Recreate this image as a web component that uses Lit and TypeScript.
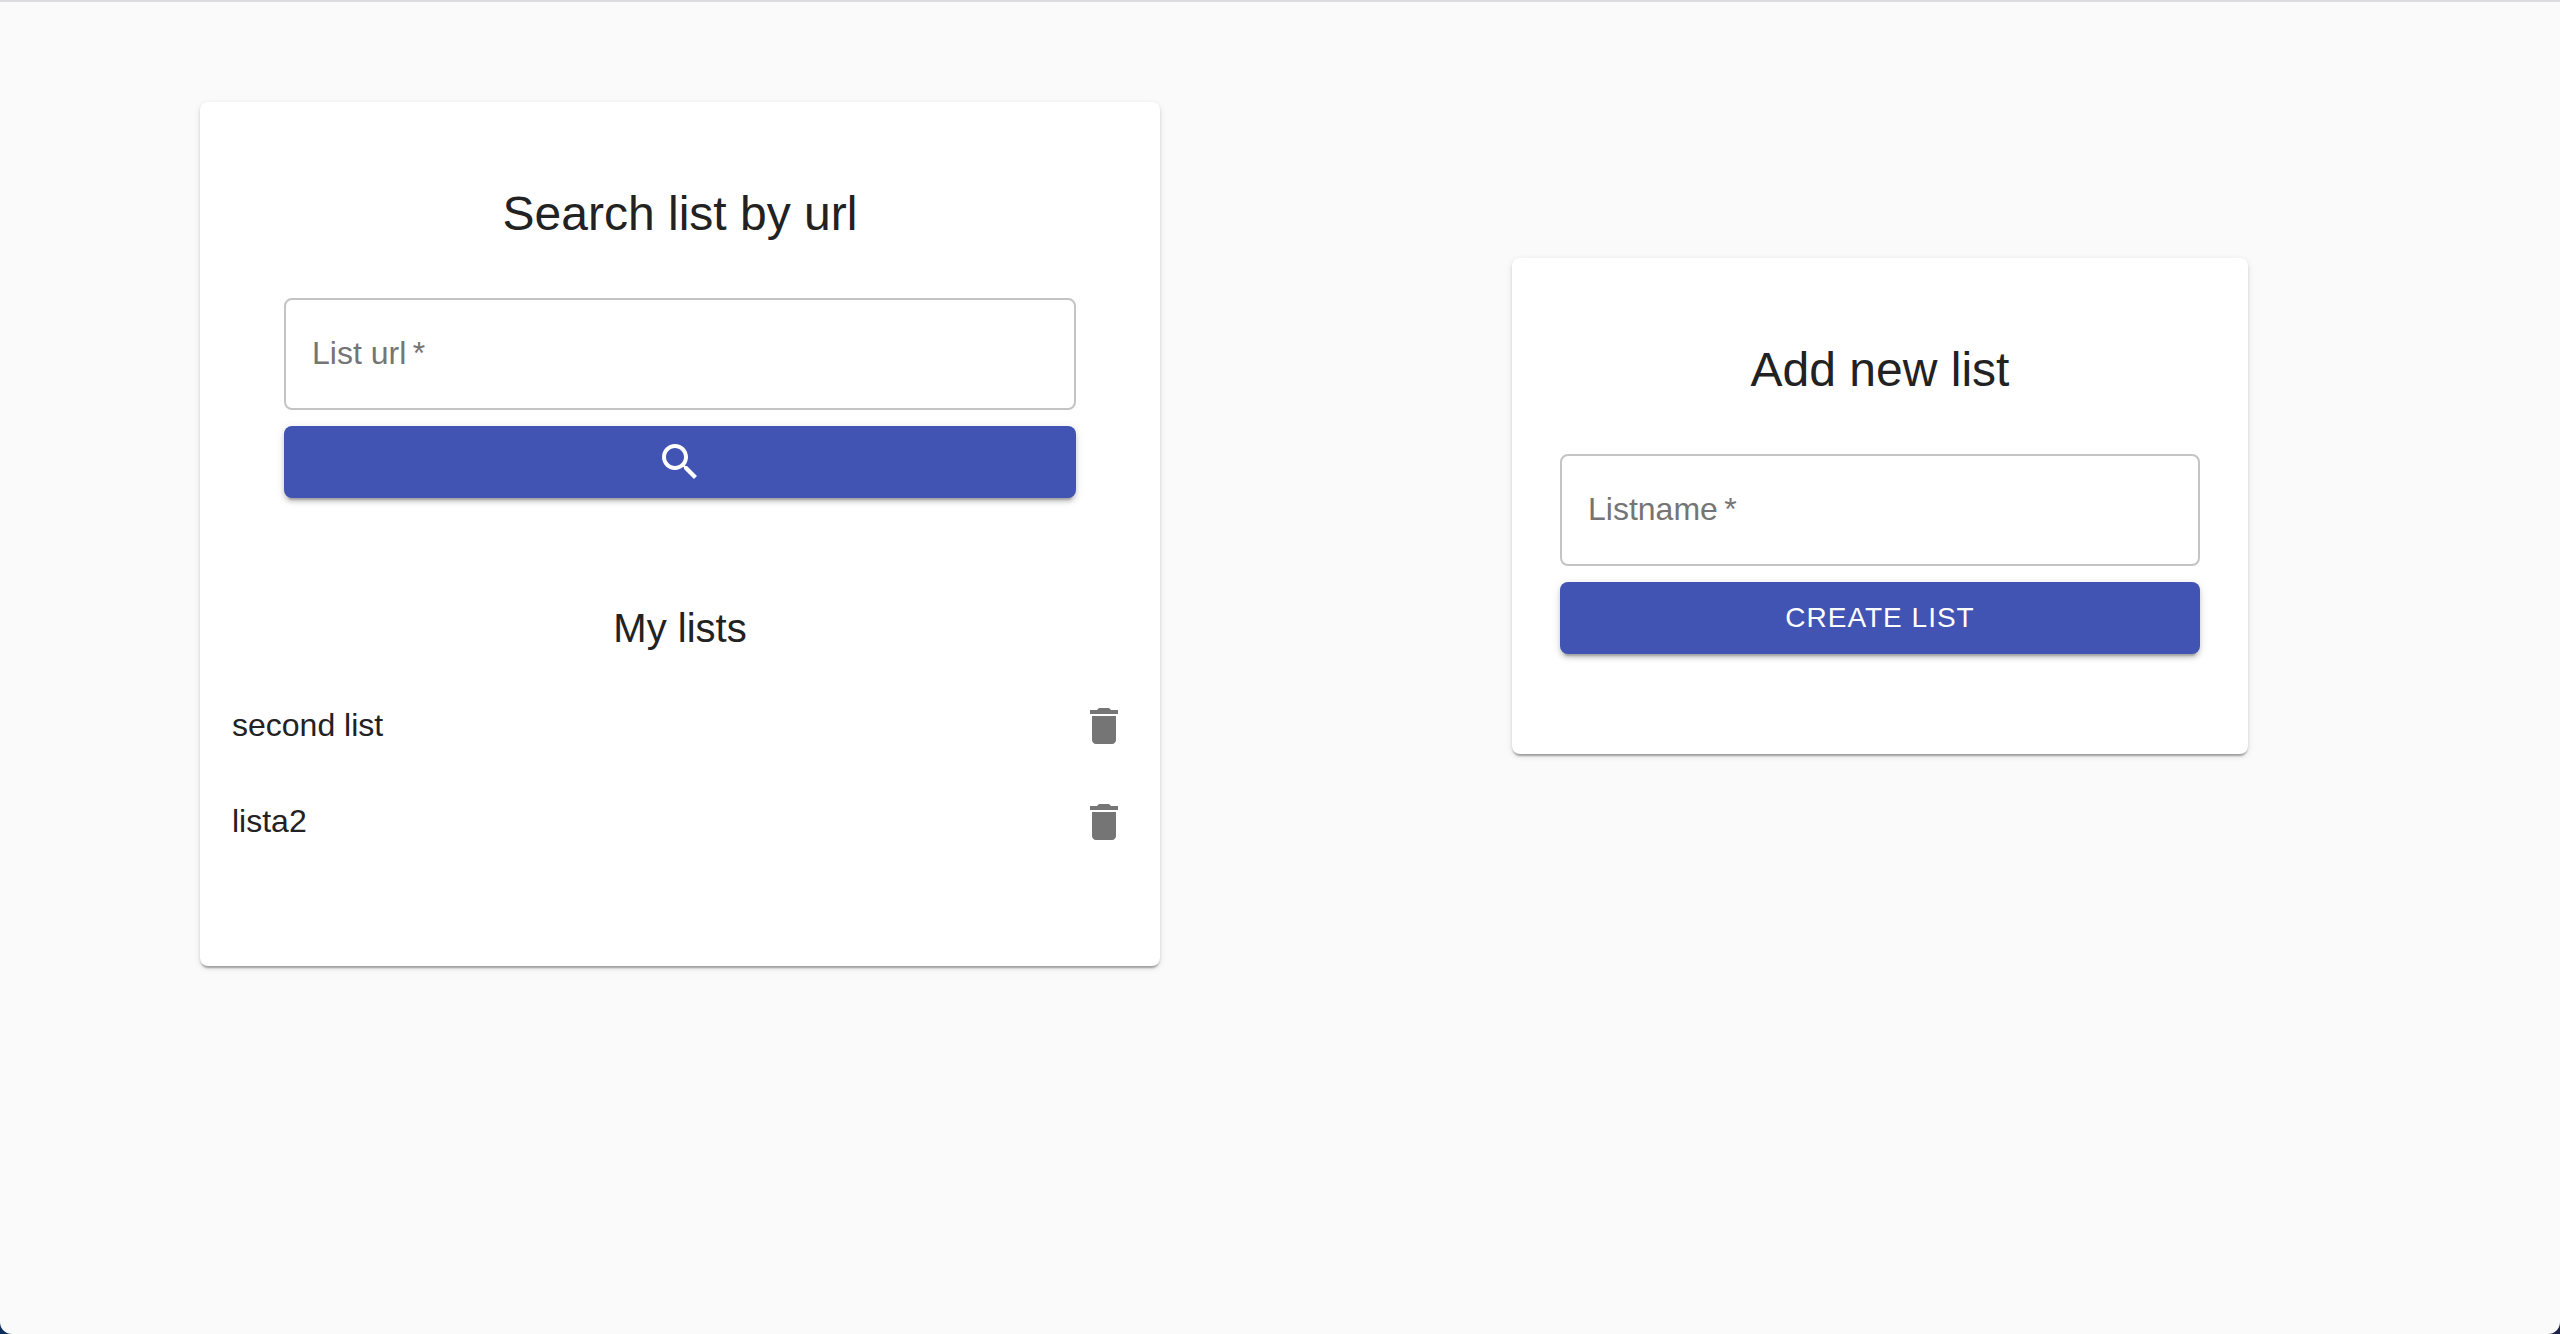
import { LitElement, html, css, svg } from "lit";
import { customElement, property, state } from "lit/decorators.js";

const searchIcon = svg`<path d="M15.5 14h-.79l-.28-.27C15.41 12.59 16 11.11 16 9.5 16 5.91 13.09 3 9.5 3S3 5.91 3 9.5 5.91 16 9.5 16c1.61 0 3.09-.59 4.23-1.57l.27.28v.79l5 4.99L20.49 19l-4.99-5zm-6 0C7.01 14 5 11.99 5 9.5S7.01 5 9.5 5 14 7.01 14 9.5 11.99 14 9.5 14z"></path>`;
const deleteIcon = svg`<path d="M6 19c0 1.1.9 2 2 2h8c1.1 0 2-.9 2-2V7H6v12zM19 4h-3.5l-1-1h-5l-1 1H5v2h14V4z"></path>`;

const base = css`
  * {
    box-sizing: border-box;
  }
  .icon {
    display: block;
    width: 48px;
    height: 48px;
    fill: currentColor;
  }
`;

/** Outlined text box whose label rests inside until there is a value. */
@customElement("outlined-field")
export class OutlinedField extends LitElement {
  @property() label = "";
  @state() private value = "";

  static styles = [
    base,
    css`
      :host {
        display: block;
      }
      .field {
        display: grid;
        align-items: center;
      }
      .input,
      .label {
        grid-area: 1 / 1;
        font-family: inherit;
        font-size: 32px;
      }
      .input {
        width: 100%;
        height: 112px;
        margin: 0;
        padding: 0 26px;
        border: 2px solid #c4c4c4;
        border-radius: 8px;
        background: none;
        color: inherit;
        outline: none;
      }
      .input:focus {
        border-color: #4154b3;
      }
      .label {
        padding: 0 28px 2px;
        line-height: 32px;
        color: #757575;
        pointer-events: none;
      }
      .label.hidden {
        opacity: 0;
      }
    `,
  ];

  render() {
    return html`
      <div class="field">
        <input
          class="input"
          id="box"
          type="text"
          required
          .value=${this.value}
          @input=${(e: Event) => (this.value = (e.target as HTMLInputElement).value)}
        />
        <label class="label ${this.value ? "hidden" : ""}" for="box">${this.label}&thinsp;*</label>
      </div>
    `;
  }
}

@customElement("app-root")
export class AppRoot extends LitElement {
  @state() private lists = ["second list", "lista2"];

  static styles = [
    base,
    css`
      :host {
        display: block;
        background: linear-gradient(to right, #0b2f5c, #1d2445);
        font-family: "Helvetica Neue", Helvetica, "Liberation Sans", Arial, sans-serif;
        color: #222222;
      }
      .page {
        min-height: 100vh;
        padding: 100px 80px;
        border-top: 2px solid #dcdbe0;
        border-radius: 0 0 12px 12px;
        background: #fafafa;
        display: grid;
        grid-template-columns: 1fr 1fr;
        align-items: start;
        justify-items: center;
      }
      .card {
        border-radius: 8px;
        background: #ffffff;
        padding-top: 80px;
        box-shadow:
          0 4px 2px -2px rgba(0, 0, 0, 0.2),
          0 2px 2px 0 rgba(0, 0, 0, 0.14),
          0 2px 6px 0 rgba(0, 0, 0, 0.12);
      }
      .search {
        width: 80%;
        padding-bottom: 96px;
      }
      .create {
        width: 100%;
        max-width: 736px;
        margin-top: 156px;
        padding-bottom: 100px;
      }
      .title,
      .subtitle {
        margin: 0;
        font-weight: 400;
        line-height: 64px;
        text-align: center;
      }
      .title {
        font-size: 48px;
      }
      .subtitle {
        margin-top: 98px;
        font-size: 40px;
      }
      .form {
        display: grid;
        gap: 16px;
        margin-top: 52px;
        padding: 0 48px;
      }
      .search .form {
        padding: 0 84px;
      }
      .submit {
        display: flex;
        align-items: center;
        justify-content: center;
        height: 72px;
        padding: 0 32px;
        border: 0;
        border-radius: 8px;
        background: #4154b3;
        color: #ffffff;
        font-family: inherit;
        font-size: 28px;
        letter-spacing: 1px;
        text-transform: uppercase;
        cursor: pointer;
        box-shadow:
          0 6px 2px -4px rgba(0, 0, 0, 0.2),
          0 4px 4px 0 rgba(0, 0, 0, 0.14),
          0 2px 10px 0 rgba(0, 0, 0, 0.12);
      }
      .lists {
        margin: 18px 0 0;
        padding: 0;
        list-style: none;
      }
      .item {
        display: flex;
        align-items: center;
        justify-content: space-between;
        height: 96px;
        padding: 0 8px 0 32px;
      }
      .name {
        padding-bottom: 2px;
        color: inherit;
        font-size: 32px;
        line-height: 48px;
        text-decoration: none;
      }
      .remove {
        padding: 24px;
        border: 0;
        border-radius: 50%;
        background: none;
        color: #757575;
        cursor: pointer;
      }
    `,
  ];

  private remove(name: string) {
    this.lists = this.lists.filter((item) => item !== name);
  }

  render() {
    return html`
      <main class="page">
        <section class="card search">
          <h1 class="title">Search list by url</h1>
          <form class="form" @submit=${(e: Event) => e.preventDefault()}>
            <outlined-field label="List url"></outlined-field>
            <button class="submit" type="submit" aria-label="Search">
              <svg class="icon" viewBox="0 0 24 24" aria-hidden="true">${searchIcon}</svg>
            </button>
          </form>
          <h2 class="subtitle">My lists</h2>
          <ul class="lists">
            ${this.lists.map(
              (name) => html`
                <li class="item">
                  <a class="name" href="#${name}">${name}</a>
                  <button class="remove" type="button" aria-label="Delete" @click=${() => this.remove(name)}>
                    <svg class="icon" viewBox="0 0 24 24" aria-hidden="true">${deleteIcon}</svg>
                  </button>
                </li>
              `,
            )}
          </ul>
        </section>
        <section class="card create">
          <h1 class="title">Add new list</h1>
          <form class="form" @submit=${(e: Event) => e.preventDefault()}>
            <outlined-field label="Listname"></outlined-field>
            <button class="submit" type="submit">Create list</button>
          </form>
        </section>
      </main>
    `;
  }
}
